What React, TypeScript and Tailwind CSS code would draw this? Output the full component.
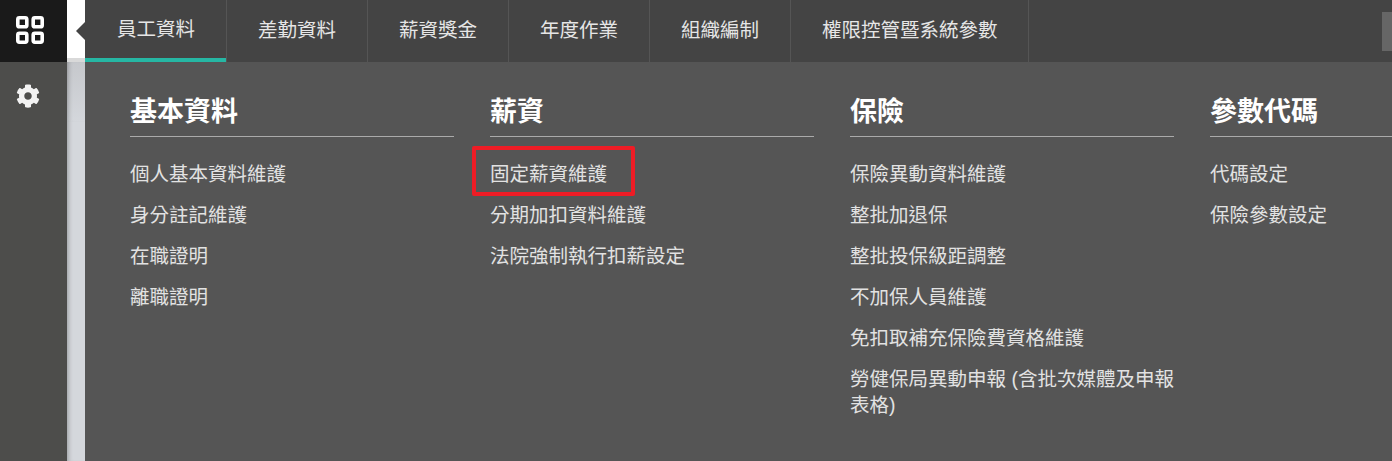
import React from "react";
import { FaCog } from "react-icons/fa";

const tabs = ["員工資料", "差勤資料", "薪資獎金", "年度作業", "組織編制", "權限控管暨系統參數"];

const columns = [
  { title: "基本資料", items: ["個人基本資料維護", "身分註記維護", "在職證明", "離職證明"] },
  { title: "薪資", items: ["固定薪資維護", "分期加扣資料維護", "法院強制執行扣薪設定"] },
  {
    title: "保險",
    items: [
      "保險異動資料維護",
      "整批加退保",
      "整批投保級距調整",
      "不加保人員維護",
      "免扣取補充保險費資格維護",
      "勞健保局異動申報 (含批次媒體及申報表格)",
    ],
  },
  { title: "參數代碼", items: ["代碼設定", "保險參數設定"] },
];

export default function App() {
  return (
    <div
      className="flex h-[461px] w-[1392px] overflow-hidden bg-[#555555]"
      style={{ fontFamily: '"Liberation Sans", "Noto Sans CJK TC", sans-serif' }}
    >
      <aside className="flex w-[67px] shrink-0 flex-col bg-[#4d4d4b]">
        <div className="flex h-[62px] items-center bg-[#1a1a1a] pb-[3px] pl-[16px]">
          <svg width="28" height="28" viewBox="0 0 28 28" fill="none" stroke="white" strokeWidth="3.6">
            <rect x="1.8" y="1.8" width="9" height="9" rx="1.6" />
            <rect x="17.2" y="1.8" width="9" height="9" rx="1.6" />
            <rect x="1.8" y="17.2" width="9" height="9" rx="1.6" />
            <rect x="17.2" y="17.2" width="9" height="9" rx="1.6" />
          </svg>
        </div>
        <div className="pl-[16px] pt-[22px]">
          <FaCog className="text-[24px] text-[#f2f2f2]" />
        </div>
      </aside>

      <div className="flex w-[18px] shrink-0 flex-col bg-[#d4d7dc] shadow-[inset_5px_0_5px_-4px_rgba(0,0,0,0.3)]">
        <div className="h-[58px] bg-white" />
        <div className="h-[4px] bg-[#d9d9d9]" />
        <div className="h-[60px] bg-linear-to-b from-[#c6c8cc] to-[#d4d7dc] shadow-[inset_5px_0_5px_-4px_rgba(0,0,0,0.3)]" />
      </div>

      <main className="relative min-w-0 flex-1">
        <div className="absolute left-[-9px] top-[22px] h-0 w-0 border-y-[9px] border-r-[9px] border-y-transparent border-r-[#444444]" />
        <nav className="flex h-[62px] bg-[#444444]">
          {tabs.map((tab, i) => (
            <div
              key={tab}
              className={
                i === 0
                  ? "flex h-[62px] w-[141px] items-center border-b-4 border-[#26b7a4] pl-[32px] pt-[2px] text-[19.5px] text-[#e6e6e6]"
                  : "flex h-[62px] items-center border-l border-[#555555] pl-[31px] pr-[31px] last-of-type:pr-[30px] text-[19.5px] text-[#e6e6e6]"
              }
            >
              {tab}
            </div>
          ))}
          <span className="border-l border-[#555555]" />
          <span className="ml-auto mt-[12px] h-[39px] w-[10px] bg-[#666666]" />
        </nav>

        <div className="flex gap-[36px] pl-[45px] pt-[30px]">
          {columns.map((col) => (
            <section key={col.title} className="w-[324px] shrink-0">
              <h3 className="h-[45px] border-b border-[#aaaaaa] text-[27px] font-bold leading-[40px] text-white">
                {col.title}
              </h3>
              <ul className="pt-[24px]">
                {col.items.map((item) => (
                  <li key={item} className="relative mb-[15px] text-[19.5px] leading-[26px] text-[#e2e2e2]">
                    {item}
                    {item === "固定薪資維護" && (
                      <span className="absolute left-[-18px] top-[-15px] h-[50px] w-[163px] rounded-[2px] border-4 border-[#ee1c25]" />
                    )}
                  </li>
                ))}
              </ul>
            </section>
          ))}
        </div>
      </main>
    </div>
  );
}
